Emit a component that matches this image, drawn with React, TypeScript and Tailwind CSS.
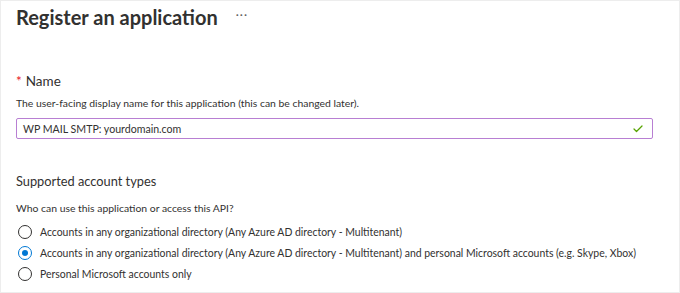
import { Check } from "lucide-react";

const options = [
  "Accounts in any organizational directory (Any Azure AD directory - Multitenant)",
  "Accounts in any organizational directory (Any Azure AD directory - Multitenant) and personal Microsoft accounts (e.g. Skype, Xbox)",
  "Personal Microsoft accounts only",
];

function Radio({ checked }: { checked: boolean }) {
  return (
    <span
      className={
        "flex size-[14px] shrink-0 items-center justify-center rounded-full border " +
        (checked ? "border-[#0078d4]" : "border-[#323130]")
      }
    >
      {checked && <span className="size-[6px] rounded-full bg-[#0078d4]" />}
    </span>
  );
}

export default function App() {
  return (
    <div
      className="h-[293px] w-[680px] overflow-hidden border border-[#ededed] bg-white text-[#323130]"
      style={{ fontFamily: 'Lato, "Noto Sans", sans-serif' }}
    >
      <div className="px-[15px]">
        <div className="flex items-center gap-[18px]">
          <h1 className="text-[20px] font-bold leading-[32px]">Register an application</h1>
          <span className="mt-[-4px] text-[12px] tracking-[1px] text-[#605e5c]">···</span>
        </div>

        <div className="mt-[38px] flex items-center gap-[4px] text-[13.5px] leading-[20px]">
          <span className="text-[#e81123]">*</span>
          <span>Name</span>
        </div>
        <p className="mt-[4px] text-[10.4px] leading-[16px]">
          The user-facing display name for this application (this can be changed later).
        </p>
        <div className="mt-[7px] flex h-[21px] w-[637px] items-center justify-between rounded-[2px] border-[1.5px] border-[#b87fd3] pl-[6px] pr-[8px]">
          <span className="text-[10.6px] leading-[16px]">WP MAIL SMTP: yourdomain.com</span>
          <Check className="size-[12px] text-[#57a300]" strokeWidth={2.5} />
        </div>

        <h2 className="mt-[32px] text-[12.8px] leading-[20px]">Supported account types</h2>
        <p className="mt-[9px] text-[10.4px] leading-[16px]">
          Who can use this application or access this API?
        </p>
        <div className="mt-[8px] flex flex-col gap-[4.5px]">
          {options.map((label, i) => (
            <div key={label} className="flex h-[16.5px] items-center gap-[8px] pl-[2px]">
              <Radio checked={i === 1} />
              <span className="whitespace-nowrap text-[10.45px] leading-[16px]">{label}</span>
            </div>
          ))}
        </div>
      </div>
    </div>
  );
}
